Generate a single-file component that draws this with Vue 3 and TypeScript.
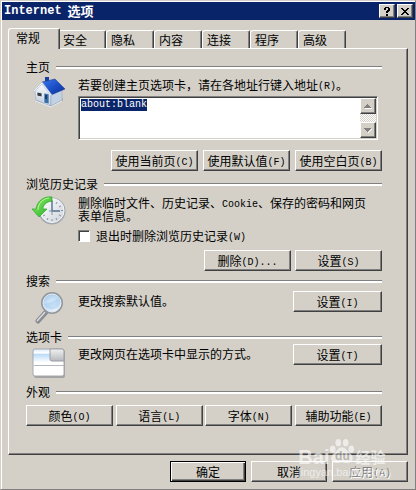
<script setup lang="ts">
import { onMounted, ref } from 'vue'

interface Action {
  text: string
  key: string
}

const tabs: string[] = ['常规', '安全', '隐私', '内容', '连接', '程序', '高级']
const activeTab = ref<string>('常规')

const homeActions: Action[] = [
  { text: '使用当前页', key: '(C)' },
  { text: '使用默认值', key: '(F)' },
  { text: '使用空白页', key: '(B)' },
]
const historyActions: Action[] = [
  { text: '删除', key: '(D)...' },
  { text: '设置', key: '(S)' },
]
const lookActions: Action[] = [
  { text: '颜色', key: '(O)' },
  { text: '语言', key: '(L)' },
  { text: '字体', key: '(N)' },
  { text: '辅助功能', key: '(E)' },
]

const homePage = ref<string>('about:blank')
const clearOnExit = ref<boolean>(false)
const homeBox = ref<HTMLTextAreaElement | null>(null)

onMounted(() => {
  homeBox.value?.focus()
  homeBox.value?.select()
})
</script>

<template>
  <main class="dialog">
    <header class="titlebar">
      <h1 class="title"><span class="title-latin">Internet</span>选项</h1>
      <button class="caption" type="button" aria-label="帮助">
        <svg width="8" height="9" viewBox="0 0 8 9" shape-rendering="crispEdges">
          <path d="M2 0h4v1h1v3h-1v1h-1v1h-2v-2h1v-1h1v-2h-2v2h-2v-2h1zM3 7h2v2h-2z" />
        </svg>
      </button>
      <button class="caption" type="button" aria-label="关闭">
        <svg width="8" height="7" viewBox="0 0 8 7" shape-rendering="crispEdges">
          <path d="M0 0h2v1h1v1h2v-1h1v-1h2v1h-1v1h-1v1h-1v1h1v1h1v1h1v1h-2v-1h-1v-1h-2v1h-1v1h-2v-1h1v-1h1v-1h1v-1h-1v-1h-1v-1h-1z" />
        </svg>
      </button>
    </header>

    <nav class="tabs" role="tablist">
      <button
        v-for="tab in tabs"
        :key="tab"
        type="button"
        role="tab"
        class="tab"
        :class="{ active: tab === activeTab }"
        :aria-selected="tab === activeTab"
        @click="activeTab = tab"
      >{{ tab }}</button>
    </nav>

    <div class="panel">
      <section>
        <h2 class="heading">主页</h2>
        <div class="body">
          <svg class="icon" width="34" height="32" viewBox="0 0 34 32">
            <defs>
              <linearGradient id="roof" x1="0" y1="0" x2="1" y2="1">
                <stop offset="0" stop-color="#3f7ae8" />
                <stop offset="0.5" stop-color="#1c4fc8" />
                <stop offset="1" stop-color="#0a2f96" />
              </linearGradient>
              <linearGradient id="wall" x1="0" y1="0" x2="0" y2="1">
                <stop offset="0" stop-color="#ffffff" />
                <stop offset="1" stop-color="#b9c9de" />
              </linearGradient>
            </defs>
            <path d="M2 24l17 6 12-6v-3z" fill="#a7a59f" opacity="0.6" />
            <path d="M13 0h4v6h-4z" fill="#1b3f9e" />
            <path d="M3 14l8-9 8 12v12L4 23z" fill="url(#wall)" stroke="#98a9c0" stroke-width="0.6" />
            <path d="M19 17l11-4v10l-11 6z" fill="#c3d1e4" stroke="#8fa2bc" stroke-width="0.5" />
            <path d="M10 5l13-3 10 10-14 6z" fill="url(#roof)" stroke="#12388f" stroke-width="0.5" />
            <path d="M1 14l9-9 10 13-1 1L10 7l-8 8z" fill="#f4f8fd" stroke="#9eb0c8" stroke-width="0.5" />
            <path d="M5 15l5 1v4l-5-1z" fill="#343a44" stroke="#ffffff" stroke-width="0.7" />
            <path d="M12 16l5 1v10l-5-1z" fill="#376ea6" stroke="#e9f0f8" stroke-width="0.6" />
            <path d="M13 18h2v4h-2z" fill="#163f70" />
            <path d="M3 24l16 6 11-6" fill="none" stroke="#e9edf0" stroke-width="1" />
          </svg>
          <div class="main">
            <label class="line" for="home">若要创建主页选项卡，请在各地址行键入地址<span class="latin">(R)</span>。</label>
            <div class="editor">
              <textarea id="home" ref="homeBox" v-model="homePage" class="home-box" spellcheck="false"></textarea>
              <div class="scrollbar">
                <button class="arrow" type="button" aria-label="向上滚动">
                  <svg width="8" height="5" viewBox="0 0 8 5" shape-rendering="crispEdges">
                    <path d="M1 4h7v1h-7z" fill="#fff" />
                    <path d="M3 0h1v1h1v1h1v1h1v1h-7v-1h1v-1h1v-1h1z" fill="#808080" />
                  </svg>
                </button>
                <button class="arrow" type="button" aria-label="向下滚动">
                  <svg width="8" height="5" viewBox="0 0 8 5" shape-rendering="crispEdges">
                    <path d="M7 1h1v1h-1v1h-1v1h-1v1h-1v-1z" fill="#fff" />
                    <path d="M0 0h7v1h-1v1h-1v1h-1v1h-1v-1h-1v-1h-1v-1h-1z" fill="#808080" />
                  </svg>
                </button>
              </div>
            </div>
            <div class="actions home-actions">
              <button v-for="a in homeActions" :key="a.key" type="button" class="btn">{{ a.text }}<span class="latin">{{ a.key }}</span></button>
            </div>
          </div>
        </div>
      </section>

      <section>
        <h2 class="heading">浏览历史记录</h2>
        <div class="body history">
          <svg class="icon" width="34" height="30" viewBox="0 0 34 30">
            <defs>
              <linearGradient id="dial" x1="0" y1="0" x2="1" y2="1">
                <stop offset="0" stop-color="#ffffff" />
                <stop offset="1" stop-color="#ccd3db" />
              </linearGradient>
              <linearGradient id="swoosh" x1="0" y1="0" x2="1" y2="1">
                <stop offset="0" stop-color="#8fee6c" />
                <stop offset="1" stop-color="#24ad20" />
              </linearGradient>
            </defs>
            <circle cx="20" cy="15" r="13.5" fill="#a1a7ae" />
            <circle cx="20" cy="14.5" r="12" fill="url(#dial)" stroke="#f4f6f8" />
            <g stroke="#8792a0" stroke-width="1">
              <path d="M20 4v2M20 23v2M29 14.5h2M25 6l-1 2M29 10l-2 1M29 20l-2-1M25 24l-1-2M15 24l1-2M11 20l2-1" />
            </g>
            <path d="M20 5v10h8" fill="none" stroke="#53708f" stroke-width="1.4" />
            <path d="M20 15h-3M20 15v4" stroke="#7f93a8" stroke-width="1" />
            <path d="M20 1C12 0 5 5 4 13H0l7 8 8-8h-4c0-4 3-7 9-8z" fill="url(#swoosh)" stroke="#2aa626" stroke-width="0.7" />
            <path d="M17 2C10 3 6 8 6 14" fill="none" stroke="#bbf7a0" stroke-width="1" />
          </svg>
          <div class="main">
            <p class="text">删除临时文件、历史记录、<span class="latin">Cookie</span>、保存的密码和网页表单信息。</p>
            <label class="check">
              <input v-model="clearOnExit" type="checkbox" class="box" />
              <span>退出时删除浏览历史记录<span class="latin">(W)</span></span>
            </label>
            <div class="actions">
              <button v-for="a in historyActions" :key="a.key" type="button" class="btn">{{ a.text }}<span class="latin">{{ a.key }}</span></button>
            </div>
          </div>
        </div>
      </section>

      <section>
        <h2 class="heading">搜索</h2>
        <div class="body search">
          <svg class="icon" width="34" height="34" viewBox="0 0 34 34">
            <defs>
              <radialGradient id="lens" cx="0.6" cy="0.7" r="0.8">
                <stop offset="0" stop-color="#f4faff" />
                <stop offset="0.6" stop-color="#c1dcf5" />
                <stop offset="1" stop-color="#9dbde0" />
              </radialGradient>
            </defs>
            <path d="M13 19l3 3-9 10c-1 1-4-1-3-3z" fill="#8d9196" stroke="#6e7277" stroke-width="0.6" />
            <path d="M13 21L5 30" stroke="#dfe2e5" stroke-width="1.2" />
            <circle cx="20" cy="12" r="10" fill="url(#lens)" stroke="#91979e" stroke-width="2" />
            <circle cx="20" cy="12" r="9" fill="none" stroke="#e8edf2" stroke-width="1" />
            <path d="M12 13c5-1 11-3 15-7 2 4 1 8-1 10-4 4-12 3-14-3z" fill="#a8cdf0" opacity="0.6" />
          </svg>
          <p class="text grow">更改搜索默认值。</p>
          <button type="button" class="btn wide">设置<span class="latin">(I)</span></button>
        </div>
      </section>

      <section>
        <h2 class="heading">选项卡</h2>
        <div class="body tabset">
          <svg class="icon" width="34" height="32" viewBox="0 0 34 32">
            <defs>
              <linearGradient id="page" x1="0" y1="0" x2="0" y2="1">
                <stop offset="0" stop-color="#dcecfa" />
                <stop offset="0.15" stop-color="#ffffff" />
                <stop offset="0.2" stop-color="#bcdcf8" />
                <stop offset="0.5" stop-color="#ffffff" />
              </linearGradient>
              <linearGradient id="back" x1="0" y1="0" x2="0" y2="1">
                <stop offset="0" stop-color="#f1f1f1" />
                <stop offset="1" stop-color="#b7b9bc" />
              </linearGradient>
            </defs>
            <rect x="2" y="3" width="31" height="28" rx="2" fill="#a3a3a3" />
            <rect x="1" y="2" width="31" height="27" rx="2" fill="url(#page)" stroke="#a4a8ad" />
            <path d="M18 2h12q2 0 2 2v10H20q-2 0-2-2z" fill="url(#back)" stroke="#9b9fa4" />
            <path d="M2 18.5h30" stroke="#b4b8bc" />
          </svg>
          <p class="text grow">更改网页在选项卡中显示的方式。</p>
          <button type="button" class="btn wide">设置<span class="latin">(T)</span></button>
        </div>
      </section>

      <section>
        <h2 class="heading">外观</h2>
        <div class="look">
          <button v-for="a in lookActions" :key="a.key" type="button" class="btn">{{ a.text }}<span class="latin">{{ a.key }}</span></button>
        </div>
      </section>
    </div>

    <footer class="footer">
      <button type="button" class="btn default">确定</button>
      <button type="button" class="btn">取消</button>
      <button type="button" class="btn" disabled>应用<span class="latin">(A)</span></button>
    </footer>

    <div class="watermark">
      <div class="brand">
        <span class="brand-latin">Bai</span>
        <span class="paw">
          <svg width="26" height="28" viewBox="0 0 28 28">
            <g fill="#fff">
              <ellipse cx="4" cy="12" rx="3" ry="4" />
              <ellipse cx="10" cy="5" rx="3" ry="4" />
              <ellipse cx="18" cy="5" rx="3" ry="4" />
              <ellipse cx="24" cy="12" rx="3" ry="4" />
              <path d="M14 10c4 0 5 4 8 6 6 4 4 11-2 11-3 0-4-1-6-1s-3 1-6 1c-6 0-8-7-2-11 3-2 4-6 8-6z" />
            </g>
          </svg>
          <span class="du">du</span>
        </span>
        <span class="brand-cjk">经验</span>
      </div>
      <div class="site">jingyan.baidu.com</div>
    </div>
  </main>
</template>

<style>
body {
  background: #d4d0c8;
}
</style>

<style scoped>
* {
  box-sizing: border-box;
}

.dialog {
  position: relative;
  padding: 1px 0 7px;
  border: 1px solid #d4d0c8;
  border-right-color: #808080;
  border-bottom-color: #808080;
  box-shadow: inset 1px 1px #fff;
  background: #d4d0c8;
  color: #000;
  font: 12px/14px "Noto Sans CJK SC", sans-serif;
}

button,
textarea {
  font: inherit;
  color: inherit;
}

.latin {
  font-family: "Liberation Mono", monospace;
  font-size: 10px;
  line-height: 0;
  vertical-align: 1px;
}

.titlebar {
  display: flex;
  align-items: center;
  gap: 2px;
  height: 18px;
  margin-left: 1px;
  padding: 0 2px;
  background: #0a246a;
}

.title {
  display: flex;
  flex: 1;
  align-items: center;
  gap: 6px;
  margin: 0;
  color: #fff;
  font-size: 13px;
  line-height: 18px;
}

.title-latin {
  font-family: "Liberation Mono", monospace;
  font-size: 12px;
}

.caption,
.arrow {
  display: flex;
  align-items: center;
  justify-content: center;
  width: 16px;
  height: 14px;
  padding: 0;
  border: 1px solid;
  border-color: #fff #404040 #404040 #fff;
  box-shadow: inset -1px -1px #808080;
  background: #d4d0c8;
}

.tabs {
  display: flex;
  align-items: flex-end;
  margin: 8px 7px 0;
}

.tab {
  position: relative;
  width: 48px;
  height: 18px;
  padding: 1px 0 0 4px;
  border: 0;
  border-top: 1px solid #fff;
  border-left: 1px solid #fff;
  border-right: 1px solid #404040;
  border-radius: 3px 2px 0 0;
  box-shadow: inset -1px 0 #808080;
  background: #d4d0c8;
  line-height: 16px;
  text-align: left;
}

.tab.active {
  z-index: 1;
  width: 52px;
  height: 21px;
  margin: 0 -2px -1px 0;
  padding: 0 0 2px 7px;
}

.panel {
  margin: 0 7px;
  padding: 11px 25px 28px 17px;
  border: 1px solid;
  border-color: #fff #404040 #404040 #fff;
  box-shadow: inset -1px -1px #808080;
}

.heading {
  display: flex;
  align-items: center;
  gap: 6px;
  height: 14px;
  margin: 0;
  font-size: 12px;
  font-weight: 400;
  line-height: 14px;
}

.heading::after {
  content: "";
  flex: 1;
  height: 2px;
  border-top: 1px solid #808080;
  background: #fff;
}

.body {
  display: flex;
  align-items: flex-start;
  gap: 12px;
  padding: 3px 0 6px 6px;
}

.history {
  padding-top: 5px;
  padding-bottom: 3px;
}

.search {
  padding-top: 3px;
  padding-bottom: 5px;
}

.tabset {
  padding-top: 0;
  padding-bottom: 6px;
}

.tabset .icon {
  margin-top: 3px;
}

.icon {
  flex: none;
}

.main {
  flex: 1;
  min-width: 0;
}

.line {
  display: block;
  line-height: 16px;
}

.editor {
  display: flex;
  height: 44px;
  margin: 3px 4px 10px 0;
  padding: 1px;
  border: 1px solid;
  border-color: #808080 #fff #fff #808080;
  background:
    linear-gradient(#404040, #404040) 0 0 / 100% 1px no-repeat,
    linear-gradient(#404040, #404040) 0 0 / 1px 100% no-repeat,
    #d4d0c8;
}

.home-box {
  flex: 1;
  min-width: 0;
  padding: 1px;
  border: 0;
  outline: 0;
  background: #fff;
  font: 10px/12px "Liberation Mono", monospace;
  overflow: hidden;
  resize: none;
}

.home-box::selection {
  background: #0a246a;
  color: #fff;
}

.scrollbar {
  display: flex;
  flex-direction: column;
  justify-content: space-between;
  width: 16px;
  background: repeating-conic-gradient(#fff 0 25%, #d4d0c8 0 50%) 0 0 / 2px 2px;
}

.arrow {
  height: 16px;
}

.actions {
  display: flex;
  justify-content: flex-end;
  gap: 4px;
}

.home-actions {
  gap: 5px;
}

.btn {
  width: 87px;
  height: 21px;
  padding: 0;
  border: 1px solid;
  border-color: #fff #404040 #404040 #fff;
  box-shadow: inset -1px -1px #808080;
  background: #d4d0c8;
  line-height: 18px;
  text-align: center;
  white-space: nowrap;
}

.wide {
  width: 89px;
}

.text {
  margin: 0;
  padding-right: 12px;
  line-height: 13px;
}

.grow {
  flex: 1;
  padding: 0;
  line-height: 20px;
}

.check {
  display: flex;
  align-items: center;
  gap: 6px;
  height: 16px;
  margin: 6px 0;
}

.box {
  appearance: none;
  width: 12px;
  height: 12px;
  margin: 0;
  border: 1px solid;
  border-color: #808080 #fff #fff #808080;
  box-shadow: inset 1px 1px #404040;
  background: #fff;
}

.look {
  display: flex;
  justify-content: space-between;
  padding-top: 6px;
}

.footer {
  display: flex;
  justify-content: flex-end;
  gap: 5px;
  padding: 6px 7px 0;
}

.footer .btn {
  width: 76px;
}

.footer .default {
  border-color: #000;
  box-shadow: inset 1px 1px #fff, inset -1px -1px #404040, inset -2px -2px #808080;
}

.btn:disabled {
  color: #808080;
  text-shadow: 1px 1px #fff;
}

.watermark {
  position: absolute;
  right: 28px;
  bottom: 10px;
  color: #fff;
  opacity: 0.6;
  pointer-events: none;
}

.brand {
  display: flex;
  align-items: flex-end;
  line-height: 16px;
}

.brand-latin {
  font: bold 20px/16px "Liberation Sans", sans-serif;
}

.paw {
  position: relative;
  height: 28px;
}

.du {
  position: absolute;
  inset: 12px 0 0;
  color: #a8a49c;
  font: bold 12px/14px "Liberation Sans", sans-serif;
  text-align: center;
}

.brand-cjk {
  font-size: 15px;
  font-weight: 700;
}

.site {
  font: 11px/14px "Liberation Sans", sans-serif;
}
</style>
